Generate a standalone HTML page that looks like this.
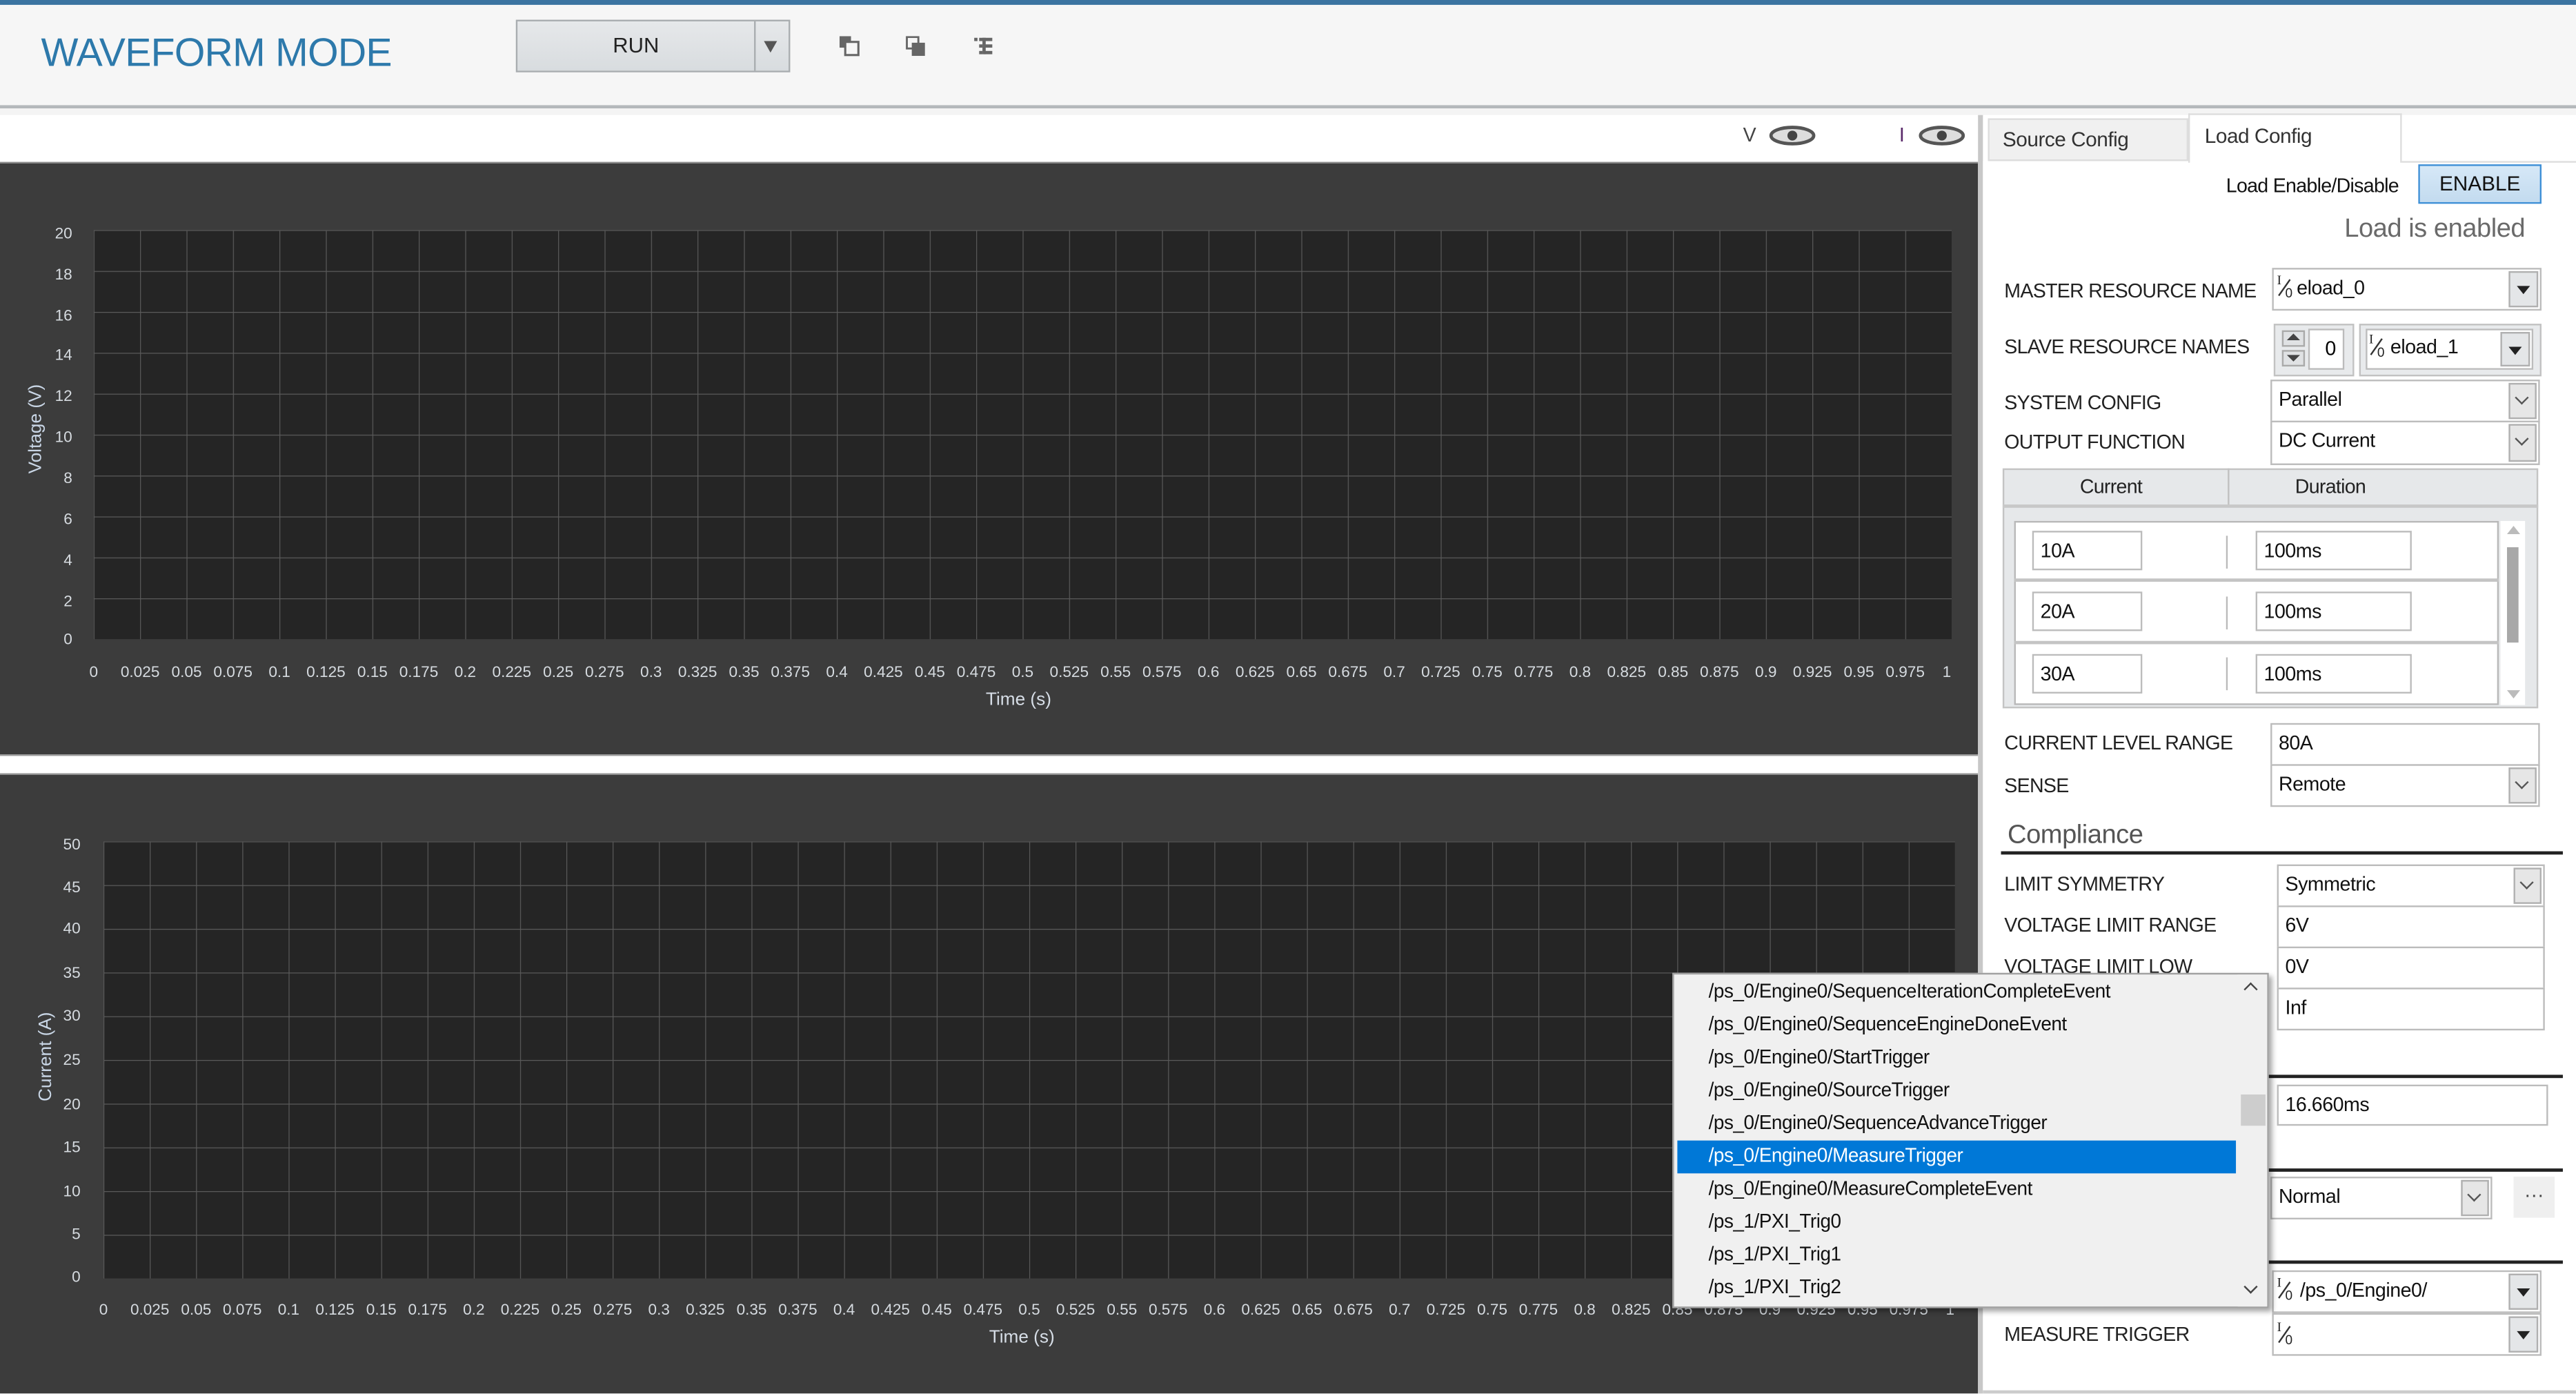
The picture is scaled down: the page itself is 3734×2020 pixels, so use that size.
<!DOCTYPE html>
<html><head><meta charset="utf-8">
<style>
html,body{margin:0;padding:0;width:3734px;height:2020px;overflow:hidden;background:#fff}
#r{position:absolute;left:0;top:0;width:1568px;height:848.3px;transform:scale(2.38138);transform-origin:0 0;font-family:"Liberation Sans",sans-serif;background:#fff;overflow:hidden}
.a{position:absolute}
.l{position:absolute;font-size:12px;color:#222;letter-spacing:-0.3px;line-height:14px;white-space:nowrap}
.b{position:absolute;background:#fff;border:1px solid #bcbcbc;box-sizing:border-box;font-size:12px;color:#111;line-height:22px;padding-left:4px;white-space:nowrap;letter-spacing:-0.2px}
.ch{position:absolute;right:1px;top:1px;bottom:1px;width:17px;background:#e6e6e6;border:1px solid #b0b0b0;box-sizing:border-box}
.ch:after{content:"";position:absolute;left:4px;top:5px;width:5px;height:5px;border-right:1px solid #555;border-bottom:1px solid #555;transform:rotate(45deg)}
.dk{position:absolute;right:1px;top:1px;bottom:1px;width:18px;background:#e4e6e8;border:1px solid #b0b0b0;box-sizing:border-box}
.dk:after{content:"";position:absolute;left:4px;top:8px;border-left:4.5px solid transparent;border-right:4.5px solid transparent;border-top:5px solid #222}
.io{position:absolute;width:10px;height:16px}
.io:before{content:"I";position:absolute;left:0;top:-1px;font-family:"Liberation Serif",serif;font-size:8px;color:#222}
.io:after{content:"0";position:absolute;left:5px;top:7px;font-size:8px;color:#222}
.io i{position:absolute;left:4px;top:2px;width:1px;height:12px;background:#333;transform:rotate(35deg)}
.li{position:absolute;left:22px;font-size:12.2px;color:#111;letter-spacing:-0.2px;white-space:nowrap;transform:scaleX(0.96);transform-origin:0 0}
</style></head><body><div id="r">
<!-- header -->
<div class="a" style="left:0;top:0;width:1568px;height:3px;background:#3b74a1"></div>
<div class="a" style="left:0;top:3px;width:1568px;height:61px;background:#f6f6f6"></div>
<div class="a" style="left:0;top:64px;width:1568px;height:2px;background:#b4b8bb"></div>
<div class="a" style="left:0;top:66px;width:1568px;height:4px;background:#f4f4f4"></div>
<div class="a" style="left:25px;top:19px;font-size:24px;color:#2d79ab;letter-spacing:-0.3px;white-space:nowrap">WAVEFORM MODE</div>
<div class="a" style="left:314px;top:12px;width:167px;height:32px;background:linear-gradient(#e6e8ea,#d8dcdf);border:1px solid #a9adb0;box-sizing:border-box"></div>
<div class="a" style="left:459px;top:13px;width:1px;height:30px;background:#a9adb0"></div>
<div class="a" style="left:373px;top:20px;font-size:13px;color:#222;">RUN</div>
<div class="a" style="left:465px;top:25px;border-left:4px solid transparent;border-right:4px solid transparent;border-top:7px solid #555"></div>
<svg class="a" style="left:511px;top:22px" width="100" height="20">
<rect x="0" y="0" width="7" height="7" fill="#666"/><rect x="3.5" y="3.5" width="8" height="8" fill="#f6f6f6" stroke="#666" stroke-width="1.3"/>
<rect x="41" y="0.5" width="7" height="7" fill="none" stroke="#666" stroke-width="1.2"/><rect x="44" y="4" width="8" height="8" fill="#666"/>
<rect x="82" y="1" width="2" height="2" fill="#666"/><rect x="85" y="1" width="8" height="2" fill="#666"/><rect x="85" y="5" width="2" height="2" fill="#666"/><rect x="88" y="5" width="5" height="2" fill="#666"/><rect x="85" y="9" width="2" height="2" fill="#666"/><rect x="88" y="9" width="5" height="2" fill="#666"/><rect x="87" y="1" width="2" height="10" fill="#666"/>
</svg>
<!-- legend strip -->
<div class="a" style="left:1061px;top:75px;font-size:12px;color:#444">V</div>
<div class="a" style="left:1156px;top:75px;font-size:12px;color:#5a2a6a">I</div>
<svg class="a" style="left:1076px;top:76px" width="120" height="14">
<ellipse cx="15" cy="6.5" rx="13" ry="5" fill="#ddd" stroke="#555" stroke-width="2"/><circle cx="15" cy="6.5" r="3" fill="#444"/>
<ellipse cx="106" cy="6.5" rx="13" ry="5" fill="#ddd" stroke="#555" stroke-width="2"/><circle cx="106" cy="6.5" r="3" fill="#444"/>
</svg>
<div class="a" style="left:1204px;top:70px;width:3px;height:778px;background:#c8c8c8"></div>
<!-- charts -->
<svg class="a" style="left:0;top:0" width="1204" height="848" font-family="Liberation Sans, sans-serif">
<defs>
<pattern id="g1" x="57" y="140" width="28.275" height="24.9" patternUnits="userSpaceOnUse"><path d="M0 0V24.9M0 0H28.275" stroke="#5a5a5a" stroke-width="1" fill="none"/></pattern>
<pattern id="g2" x="63" y="512" width="28.175" height="26.6" patternUnits="userSpaceOnUse"><path d="M0 0V26.6M0 0H28.175" stroke="#5a5a5a" stroke-width="1" fill="none"/></pattern>
<g id="xl" font-size="9.5" fill="#d6dbe0" text-anchor="middle">
<text x="57">0</text><text x="85.3">0.025</text><text x="113.6">0.05</text><text x="141.8">0.075</text><text x="170.1">0.1</text><text x="198.4">0.125</text><text x="226.7">0.15</text><text x="254.9">0.175</text><text x="283.2">0.2</text><text x="311.5">0.225</text><text x="339.8">0.25</text><text x="368">0.275</text><text x="396.3">0.3</text><text x="424.6">0.325</text><text x="452.9">0.35</text><text x="481.1">0.375</text><text x="509.4">0.4</text><text x="537.7">0.425</text><text x="566">0.45</text><text x="594.2">0.475</text><text x="622.5">0.5</text><text x="650.8">0.525</text><text x="679.1">0.55</text><text x="707.3">0.575</text><text x="735.6">0.6</text><text x="763.9">0.625</text><text x="792.2">0.65</text><text x="820.4">0.675</text><text x="848.7">0.7</text><text x="877">0.725</text><text x="905.3">0.75</text><text x="933.5">0.775</text><text x="961.8">0.8</text><text x="990.1">0.825</text><text x="1018.4">0.85</text><text x="1046.6">0.875</text><text x="1074.9">0.9</text><text x="1103.2">0.925</text><text x="1131.5">0.95</text><text x="1159.7">0.975</text><text x="1185">1</text>
</g>
</defs>
<rect x="0" y="99" width="1204" height="360" fill="#3c3c3c"/>
<rect x="0" y="98.5" width="1204" height="1" fill="#888"/>
<rect x="57" y="140" width="1131" height="249" fill="#252525"/>
<rect x="57" y="140" width="1131" height="249" fill="url(#g1)"/>
<g font-size="9.5" fill="#d6dbe0" text-anchor="end">
<text x="44" y="145">20</text><text x="44" y="170">18</text><text x="44" y="195">16</text><text x="44" y="219">14</text><text x="44" y="244">12</text><text x="44" y="269">10</text><text x="44" y="294">8</text><text x="44" y="319">6</text><text x="44" y="344">4</text><text x="44" y="369">2</text><text x="44" y="392">0</text>
</g>
<use href="#xl" y="412"/>
<text x="620" y="429" font-size="11" fill="#d6dde6" text-anchor="middle">Time (s)</text>
<text transform="translate(25,261) rotate(-90)" font-size="11" fill="#c9d6e6" text-anchor="middle">Voltage (V)</text>
<rect x="0" y="459" width="1204" height="1" fill="#999"/>
<rect x="0" y="471" width="1204" height="377" fill="#3c3c3c"/>
<rect x="0" y="470.5" width="1204" height="1" fill="#999"/>
<rect x="63" y="512" width="1127" height="266" fill="#252525"/>
<rect x="63" y="512" width="1127" height="266" fill="url(#g2)"/>
<g font-size="9.5" fill="#d6dbe0" text-anchor="end">
<text x="49" y="517">50</text><text x="49" y="543">45</text><text x="49" y="568">40</text><text x="49" y="595">35</text><text x="49" y="621">30</text><text x="49" y="648">25</text><text x="49" y="675">20</text><text x="49" y="701">15</text><text x="49" y="728">10</text><text x="49" y="754">5</text><text x="49" y="780">0</text>
</g>
<g transform="translate(6.2,0) scale(0.9965,1)"><use href="#xl" y="800"/></g>
<text x="622" y="817" font-size="11" fill="#d6dde6" text-anchor="middle">Time (s)</text>
<text transform="translate(31,643) rotate(-90)" font-size="11" fill="#c9d6e6" text-anchor="middle">Current (A)</text>
</svg>
<!-- right panel -->
<div class="a" style="left:1207px;top:98px;width:361px;height:750px;background:#fff"></div>
<div class="a" style="left:1210px;top:72px;width:122px;height:26px;background:#f0f0f0;border:1px solid #ddd;box-sizing:border-box"></div>
<div class="a" style="left:1219px;top:78px;font-size:12.5px;color:#333;letter-spacing:-0.2px">Source Config</div>
<div class="a" style="left:1332px;top:69px;width:130px;height:30px;background:#fff;border:1px solid #ddd;border-bottom:none;box-sizing:border-box"></div>
<div class="a" style="left:1342px;top:76px;font-size:12.5px;color:#333;letter-spacing:-0.2px">Load Config</div>
<div class="a" style="left:1462px;top:98px;width:106px;height:1px;background:#ddd"></div>
<div class="l" style="left:1355px;top:106px;color:#111">Load Enable/Disable</div>
<div class="a" style="left:1472px;top:100px;width:75px;height:24px;background:linear-gradient(#d6e8f7,#c3dbef);border:1px solid #3d8fd6;box-sizing:border-box;font-size:12.5px;text-align:center;line-height:22px;color:#111">ENABLE</div>
<div class="a" style="left:1427px;top:131px;font-size:16px;color:#6a6a6a;letter-spacing:-0.2px">Load is enabled</div>

<div class="l" style="left:1220px;top:170px">MASTER RESOURCE NAME</div>
<div class="b" style="left:1383px;top:163px;width:164px;height:26px;padding-left:14px;line-height:23px">eload_0<span class="dk"></span></div>
<div class="io" style="left:1386px;top:167px"><i></i></div>
<div class="l" style="left:1220px;top:204px">SLAVE RESOURCE NAMES</div>
<div class="a" style="left:1384px;top:197px;width:49px;height:32px;background:#e8eaec;border:1px solid #c2c2c2;box-sizing:border-box"></div>
<div class="a" style="left:1389px;top:201px;width:14px;height:10px;background:#e0e2e4;border:1px solid #aaa;box-sizing:border-box"></div>
<div class="a" style="left:1392px;top:203px;border-left:4px solid transparent;border-right:4px solid transparent;border-bottom:4px solid #444"></div>
<div class="a" style="left:1389px;top:213px;width:14px;height:10px;background:#e0e2e4;border:1px solid #aaa;box-sizing:border-box"></div>
<div class="a" style="left:1392px;top:216px;border-left:4px solid transparent;border-right:4px solid transparent;border-top:4px solid #444"></div>
<div class="a" style="left:1405px;top:200px;width:22px;height:25px;background:#fff;border:1px solid #bbb;box-sizing:border-box;font-size:12px;text-align:right;padding-right:4px;line-height:23px">0</div>
<div class="a" style="left:1436px;top:197px;width:111px;height:32px;background:#e8eaec;border:1px solid #c2c2c2;box-sizing:border-box"></div>
<div class="b" style="left:1440px;top:200px;width:102px;height:25px;padding-left:14px;line-height:20px">eload_1<span class="dk"></span></div>
<div class="io" style="left:1442px;top:203px"><i></i></div>

<div class="l" style="left:1220px;top:238px">SYSTEM CONFIG</div>
<div class="b" style="left:1382px;top:231px;width:164px;height:26px;line-height:22px">Parallel<span class="ch"></span></div>
<div class="l" style="left:1220px;top:262px">OUTPUT FUNCTION</div>
<div class="b" style="left:1382px;top:256px;width:164px;height:27px;line-height:22px">DC Current<span class="ch"></span></div>

<div class="a" style="left:1219px;top:285px;width:326px;height:146px;background:#e6e8ea;border:1px solid #c4c4c4;box-sizing:border-box"></div>
<div class="a" style="left:1356px;top:285px;width:1px;height:23px;background:#c0c0c0"></div>
<div class="a" style="left:1219px;top:307px;width:326px;height:2px;background:#c8c8c8"></div>
<div class="l" style="left:1266px;top:289px">Current</div>
<div class="l" style="left:1397px;top:289px">Duration</div>
<div class="a" style="left:1226px;top:317px;width:295px;height:112px;background:#fff;border:1px solid #b8b8b8;box-sizing:border-box"></div>
<div class="a" style="left:1226px;top:352px;width:295px;height:2px;background:#c4c4c4"></div>
<div class="a" style="left:1226px;top:390px;width:295px;height:2px;background:#c4c4c4"></div>
<div class="a" style="left:1522px;top:317px;width:15px;height:112px;background:#fff"></div>
<div class="a" style="left:1526px;top:320px;border-left:4px solid transparent;border-right:4px solid transparent;border-bottom:5px solid #bbb"></div>
<div class="a" style="left:1526px;top:333px;width:7px;height:58px;background:#a8a8a8"></div>
<div class="a" style="left:1526px;top:420px;border-left:4px solid transparent;border-right:4px solid transparent;border-top:5px solid #bbb"></div>
<div class="b" style="left:1237px;top:323px;width:67px;height:24px;line-height:22px">10A</div>
<div class="b" style="left:1373px;top:323px;width:95px;height:24px;line-height:22px">100ms</div>
<div class="b" style="left:1237px;top:360px;width:67px;height:24px;line-height:22px">20A</div>
<div class="b" style="left:1373px;top:360px;width:95px;height:24px;line-height:22px">100ms</div>
<div class="b" style="left:1237px;top:398px;width:67px;height:24px;line-height:22px">30A</div>
<div class="b" style="left:1373px;top:398px;width:95px;height:24px;line-height:22px">100ms</div>
<div class="a" style="left:1355px;top:326px;width:1px;height:20px;background:#bbb"></div>
<div class="a" style="left:1355px;top:363px;width:1px;height:20px;background:#bbb"></div>
<div class="a" style="left:1355px;top:400px;width:1px;height:20px;background:#bbb"></div>

<div class="l" style="left:1220px;top:445px">CURRENT LEVEL RANGE</div>
<div class="b" style="left:1382px;top:440px;width:164px;height:26px;line-height:22px">80A</div>
<div class="l" style="left:1220px;top:471px">SENSE</div>
<div class="b" style="left:1382px;top:465px;width:164px;height:26px;line-height:22px">Remote<span class="ch"></span></div>
<div class="a" style="left:1222px;top:500px;font-size:16px;color:#555;letter-spacing:-0.2px">Compliance</div>
<div class="a" style="left:1218px;top:518px;width:342px;height:1.5px;background:#222"></div>
<div class="l" style="left:1220px;top:531px">LIMIT SYMMETRY</div>
<div class="b" style="left:1386px;top:526px;width:163px;height:26px;line-height:22px">Symmetric<span class="ch"></span></div>
<div class="l" style="left:1220px;top:556px">VOLTAGE LIMIT RANGE</div>
<div class="b" style="left:1386px;top:551px;width:163px;height:26px;line-height:22px">6V</div>
<div class="l" style="left:1220px;top:581px">VOLTAGE LIMIT LOW</div>
<div class="b" style="left:1386px;top:576px;width:163px;height:26px;line-height:22px">0V</div>
<div class="b" style="left:1386px;top:601px;width:163px;height:26px;line-height:22px">Inf</div>
<div class="a" style="left:1380px;top:654px;width:180px;height:1.5px;background:#222"></div>
<div class="b" style="left:1386px;top:660px;width:165px;height:25px;line-height:22px">16.660ms</div>
<div class="a" style="left:1380px;top:711px;width:180px;height:1.5px;background:#222"></div>
<div class="b" style="left:1382px;top:716px;width:135px;height:26px;line-height:22px">Normal<span class="ch"></span></div>
<div class="a" style="left:1530px;top:716px;width:25px;height:25px;background:#efefef;font-size:12px;text-align:center;line-height:22px;color:#444">···</div>
<div class="a" style="left:1380px;top:767px;width:180px;height:1.5px;background:#222"></div>
<div class="b" style="left:1383px;top:773px;width:164px;height:26px;padding-left:16px;line-height:23px">/ps_0/Engine0/<span class="dk"></span></div>
<div class="io" style="left:1386px;top:777px"><i></i></div>
<div class="l" style="left:1220px;top:805px">MEASURE TRIGGER</div>
<div class="b" style="left:1383px;top:799px;width:164px;height:26px"><span class="dk"></span></div>
<div class="io" style="left:1386px;top:804px"><i></i></div>
<div class="a" style="left:1207px;top:846px;width:361px;height:2px;background:#ccc"></div>

<!-- dropdown list -->
<div class="a" style="left:1018px;top:592px;width:363px;height:204px;background:#f0f0f0;border:1px solid #a0a0a0;box-sizing:border-box;box-shadow:2px 2px 3px rgba(0,0,0,0.35)"></div>
<div class="a" style="left:1021px;top:694px;width:340px;height:20px;background:#0078d7"></div>
<div class="a" style="left:1362px;top:593px;width:18px;height:202px;background:#f0f0f0"></div>
<div class="a" style="left:1364px;top:666px;width:15px;height:19px;background:#cdcdcd"></div>
<div class="a" style="left:1367px;top:599px;width:5px;height:5px;border-left:1.3px solid #444;border-top:1.3px solid #444;transform:rotate(45deg)"></div>
<div class="a" style="left:1367px;top:780px;width:5px;height:5px;border-right:1.3px solid #444;border-bottom:1.3px solid #444;transform:rotate(45deg)"></div>
<div class="a" style="left:1018px;top:595px;width:345px;height:200px">
<div class="li" style="top:1px">/ps_0/Engine0/SequenceIterationCompleteEvent</div>
<div class="li" style="top:21px">/ps_0/Engine0/SequenceEngineDoneEvent</div>
<div class="li" style="top:41px">/ps_0/Engine0/StartTrigger</div>
<div class="li" style="top:61px">/ps_0/Engine0/SourceTrigger</div>
<div class="li" style="top:81px">/ps_0/Engine0/SequenceAdvanceTrigger</div>
<div class="li" style="top:101px;color:#fff">/ps_0/Engine0/MeasureTrigger</div>
<div class="li" style="top:121px">/ps_0/Engine0/MeasureCompleteEvent</div>
<div class="li" style="top:141px">/ps_1/PXI_Trig0</div>
<div class="li" style="top:161px">/ps_1/PXI_Trig1</div>
<div class="li" style="top:181px">/ps_1/PXI_Trig2</div>
</div>
</div></body></html>
